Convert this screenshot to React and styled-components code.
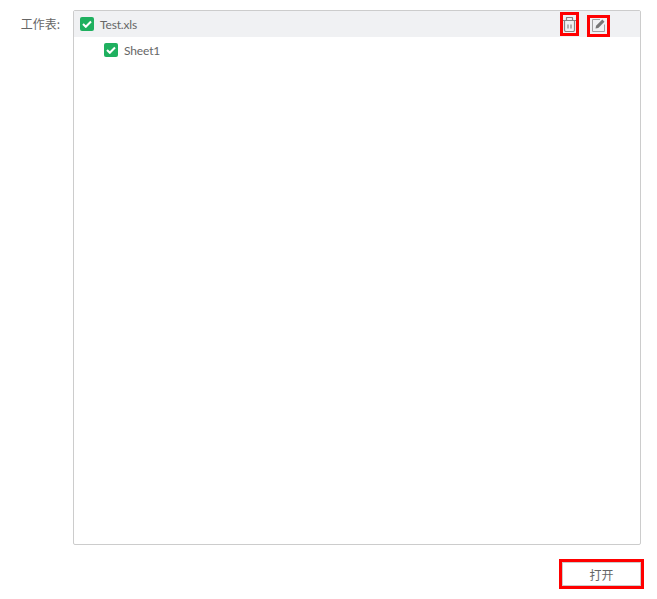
import React from "react"
import styled, { createGlobalStyle } from "styled-components"

const GlobalStyle = createGlobalStyle`
  html, body {
    margin: 0;
    padding: 0;
    background: #fff;
  }
  body {
    font-family: Lato, "Noto Sans CJK SC", sans-serif;
    color: #666;
  }
`

const Page = styled.div`
  width: 657px;
  height: 599px;
  box-sizing: border-box;
  padding: 10px 16px 0 0;
  display: flex;
  flex-direction: column;
`

const Field = styled.div`
  display: flex;
  align-items: flex-start;
`

const FieldLabel = styled.label`
  width: 60px;
  margin-right: 13px;
  padding-top: 5px;
  text-align: right;
  font-size: 12px;
  line-height: 18px;
  color: #666;
  font-family: "Noto Sans CJK SC", sans-serif;
`

const TreeBox = styled.div`
  width: 568px;
  height: 535px;
  box-sizing: border-box;
  border: 1px solid #ccc;
  border-radius: 2px;
`

const Row = styled.div`
  height: 26px;
  display: flex;
  align-items: center;
  padding-left: ${({ $indent }) => $indent}px;
  background: ${({ $active }) => ($active ? "#f0f1f3" : "transparent")};
`

const Check = styled.span`
  width: 14px;
  height: 14px;
  border-radius: 2px;
  background: #1fb05f;
  display: flex;
  align-items: center;
  justify-content: center;
  margin-right: 6px;
  flex: none;
`

const RowName = styled.span`
  font-size: 12px;
  line-height: 16px;
  padding-top: 1px;
  letter-spacing: -0.15px;
  color: #666;
  flex: 1;
`

const Actions = styled.div`
  display: flex;
  align-items: flex-start;
  gap: 8px;
  margin-right: 30px;
  align-self: flex-start;
`

const IconButton = styled.button`
  box-sizing: border-box;
  width: ${({ $w }) => $w}px;
  height: ${({ $h }) => $h}px;
  margin-top: ${({ $top }) => $top}px;
  padding: 0;
  border: 3px solid #f00;
  background: transparent;
  display: flex;
  align-items: center;
  justify-content: center;
`

const Footer = styled.div`
  display: flex;
  justify-content: flex-end;
  margin-top: 14px;
`

const OpenButton = styled.button`
  width: 85px;
  height: 30px;
  box-sizing: border-box;
  border: 3px solid #f00;
  background: #fff;
  padding: 0;
  margin-right: -3px;
  display: block;
  font-size: 12px;
  color: #666;
  font-family: "Noto Sans CJK SC", sans-serif;
`

const OpenInner = styled.span`
  display: flex;
  height: 24px;
  box-sizing: border-box;
  align-items: center;
  justify-content: center;
  border: 1px solid #ccc;
`

const Tick = () => (
  <svg width="10" height="8" viewBox="0 0 10 8">
    <path d="M1 4l2.8 2.8L9 1.5" fill="none" stroke="#fff" strokeWidth="2" />
  </svg>
)

const TrashIcon = () => (
  <svg width="13" height="15" viewBox="0 0 13 15" fill="none" stroke="#858585" strokeWidth="1.2">
    <path d="M0 3.5h13M3.5 3.5V1a.5.5 0 0 1 .5-.5h5a.5.5 0 0 1 .5.5v2.5M1.5 3.5V13a1.5 1.5 0 0 0 1.5 1.5h7a1.5 1.5 0 0 0 1.5-1.5V3.5M5 7.5v4M8 7.5v4" />
  </svg>
)

const EditIcon = () => (
  <svg width="14" height="16" viewBox="0 0 14 16" fill="none">
    <path d="M8 1.5H.5v12h12V6.5" stroke="#a0a0a0" strokeWidth="1" />
    <path d="M3.5 10.5l.6-2.8 6.2-6.2 2.2 2.2-6.2 6.2z" fill="#777" />
  </svg>
)

const App = () => (
  <Page>
    <GlobalStyle />
    <Field>
      <FieldLabel>工作表:</FieldLabel>
      <TreeBox>
        <Row $active $indent={6}>
          <Check>
            <Tick />
          </Check>
          <RowName>Test.xls</RowName>
          <Actions>
            <IconButton $w={19} $h={24} $top={1} aria-label="delete">
              <TrashIcon />
            </IconButton>
            <IconButton $w={23} $h={22} $top={4} aria-label="edit">
              <EditIcon />
            </IconButton>
          </Actions>
        </Row>
        <Row $indent={30}>
          <Check>
            <Tick />
          </Check>
          <RowName>Sheet1</RowName>
        </Row>
      </TreeBox>
    </Field>
    <Footer>
      <OpenButton>
        <OpenInner>打开</OpenInner>
      </OpenButton>
    </Footer>
  </Page>
)

export default App
